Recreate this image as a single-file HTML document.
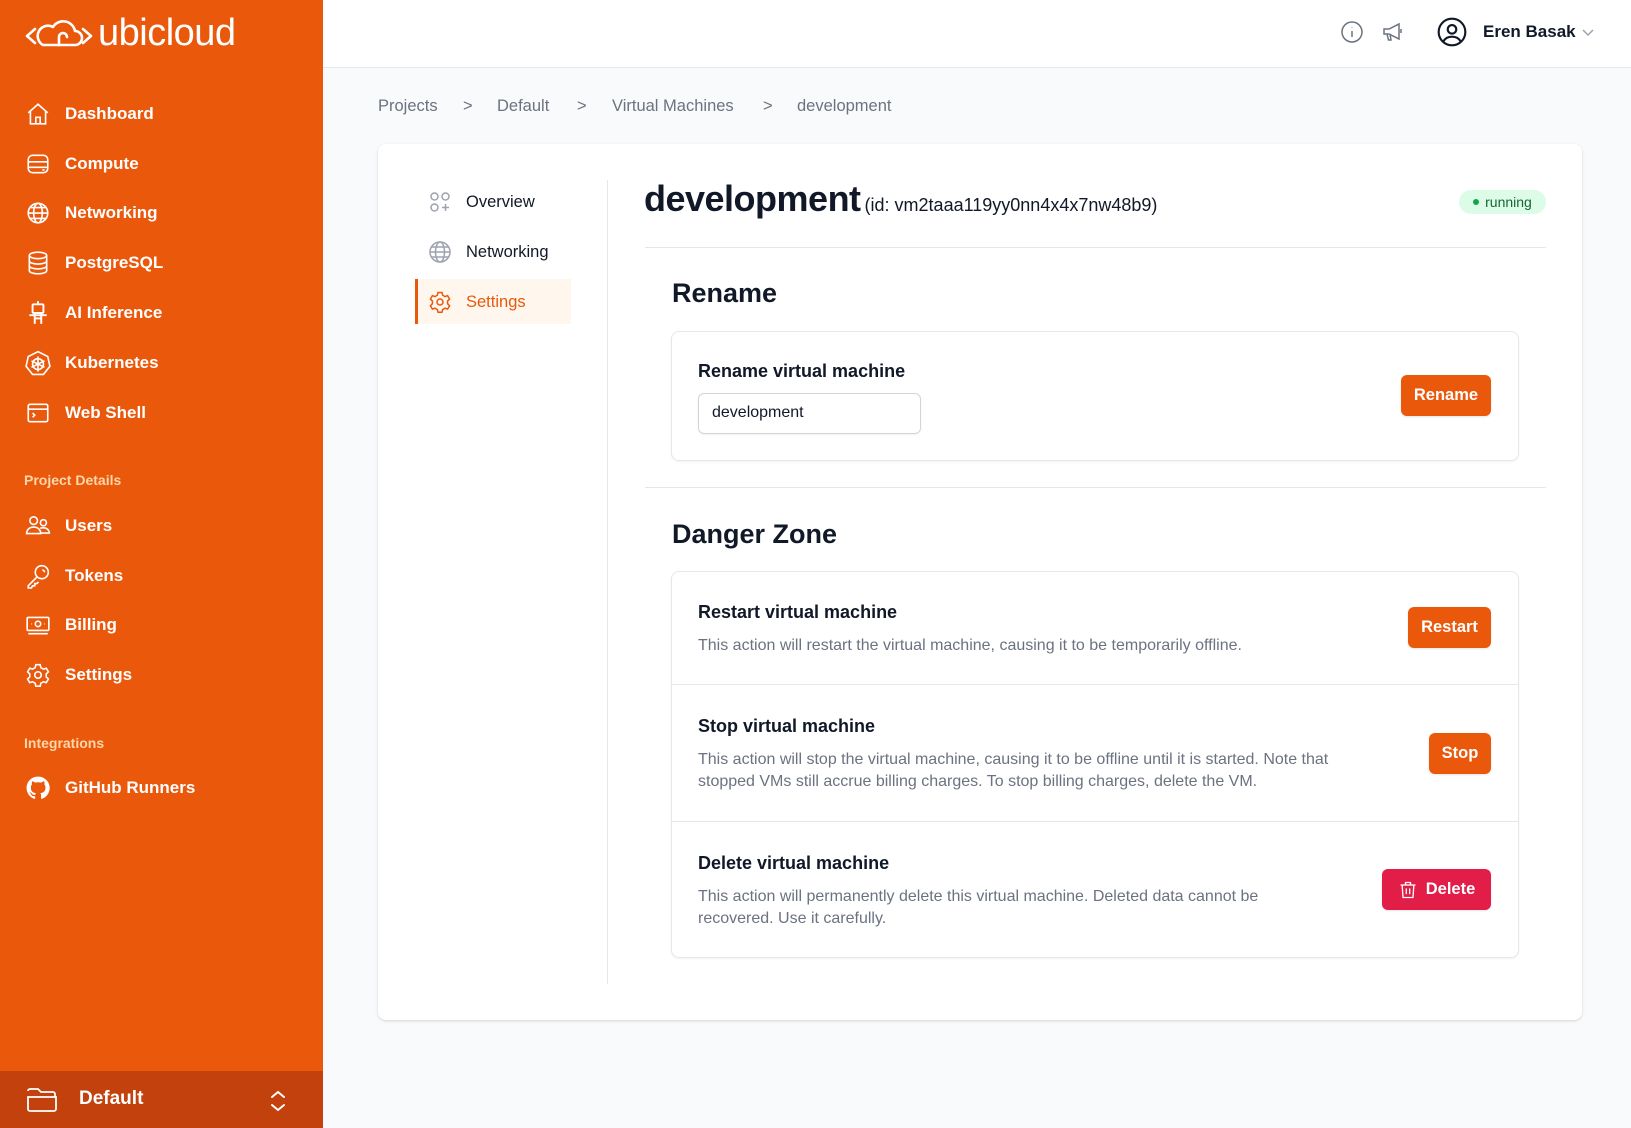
<!DOCTYPE html>
<html><head><meta charset="utf-8"><style>
*{box-sizing:border-box;margin:0;padding:0}
body{width:1631px;height:1128px;overflow:hidden;background:#f9fafb;font-family:"Liberation Sans",sans-serif;color:#111827;position:relative}
.abs{position:absolute}
#side{left:0;top:0;width:323px;height:1128px;background:#ea580c;color:#fff}
.nav{position:absolute;left:25px;height:26px;display:flex;align-items:center;font-size:17px;font-weight:bold;color:#fff}
.nav svg{width:26px;height:26px;margin-right:14px;flex:none}
.sec{position:absolute;left:24px;font-size:14px;color:#fed7aa;font-weight:bold}
#bottom{left:0;top:1071px;width:323px;height:57px;background:#c2410c}
#top{left:323px;top:0;width:1308px;height:68px;background:#fff;border-bottom:1px solid #e5e7eb}
.crumb{position:absolute;top:97px;font-size:16.5px;color:#6b7280}
#card{left:378px;top:144px;width:1204px;height:876px;background:#fff;border-radius:8px;box-shadow:0 1px 3px rgba(0,0,0,.1),0 1px 2px rgba(0,0,0,.06)}
.sub{position:absolute;left:428px;display:flex;align-items:center;font-size:16.5px;color:#111827;height:24px}
.sub svg{width:24px;height:24px;margin-right:14px}
.box{position:absolute;left:671px;width:848px;background:#fff;border:1px solid #e5e7eb;border-radius:8px;box-shadow:0 1px 2px rgba(0,0,0,.05)}
.t{position:absolute;left:698px;font-size:18px;font-weight:bold;color:#111827}
.d{position:absolute;left:698px;font-size:16px;color:#6b7280;line-height:22px}
.btn{position:absolute;height:41px;border-radius:6px;background:#ea580c;color:#fff;font-weight:bold;font-size:16.5px;display:flex;align-items:center;justify-content:center;box-shadow:0 1px 2px rgba(0,0,0,.1)}
.hr{position:absolute;left:645px;width:901px;height:1px;background:#e5e7eb}
</style></head><body>
<div id="side" class="abs">
 <div class="abs" style="left:24px;top:12px;display:flex;align-items:center">
  <svg width="70" height="34" viewBox="0 0 68 34" fill="none" stroke="#fff" stroke-width="2.6" stroke-linecap="round" stroke-linejoin="round"><path d="M10 12 L2 19 L10 26"/><path d="M58 12 L66 19 L58 26"/><path d="M18 28 H50 a7 7 0 0 0 0-14 a12 12 0 0 0-22-4 a8 8 0 0 0-10 18z"/><path d="M34 28 V20 a4 4 0 0 1 8 0"/></svg>
  <span style="font-size:38px;color:#fff;margin-left:4px;letter-spacing:-0.5px;font-weight:300">ubicloud</span>
 </div>
 <div class="nav" style="top:101px"><svg viewBox="0 0 24 24" fill="none" stroke="#fff" stroke-width="1.5"><path d="M3 11 L12 3 L21 11 M5 9 V21 H19 V9 M10 21 V15 H14 V21"/></svg>Dashboard</div>
 <div class="nav" style="top:151px"><svg viewBox="0 0 24 24" fill="none" stroke="#fff" stroke-width="1.5"><rect x="3" y="4" width="18" height="16" rx="4"/><path d="M3 10 H21 M3 15 H21 M16 17.5 h2"/></svg>Compute</div>
 <div class="nav" style="top:200px"><svg viewBox="0 0 24 24" fill="none" stroke="#fff" stroke-width="1.5"><circle cx="12" cy="12" r="9"/><ellipse cx="12" cy="12" rx="4" ry="9"/><path d="M3 12 H21 M5 7 H19 M5 17 H19"/></svg>Networking</div>
 <div class="nav" style="top:250px"><svg viewBox="0 0 24 24" fill="none" stroke="#fff" stroke-width="1.5"><ellipse cx="12" cy="5" rx="8" ry="3"/><path d="M4 5 V19 c0 1.7 3.6 3 8 3 s8-1.3 8-3 V5 M4 10 c0 1.7 3.6 3 8 3 s8-1.3 8-3 M4 14.5 c0 1.7 3.6 3 8 3 s8-1.3 8-3"/></svg>PostgreSQL</div>
 <div class="nav" style="top:300px"><svg viewBox="0 0 24 24" fill="none" stroke="#fff" stroke-width="1.8"><rect x="7" y="4" width="10" height="8" rx="1"/><path d="M12 1 V4 M4 14 H20 M9 12 V22 M15 12 V22 M9 17 H15"/></svg>AI Inference</div>
 <div class="nav" style="top:350px"><svg viewBox="0 0 24 24" fill="none" stroke="#fff" stroke-width="1.5"><path d="M12 1.5 L21 6 L23 15 L17 22.5 H7 L1 15 L3 6 Z"/><circle cx="12" cy="13" r="5"/><path d="M12 6 V20 M6 10 L18 16 M6 16 L18 10"/></svg>Kubernetes</div>
 <div class="nav" style="top:400px"><svg viewBox="0 0 24 24" fill="none" stroke="#fff" stroke-width="1.5"><rect x="3" y="4" width="18" height="16" rx="1.5"/><path d="M3 8.5 H21 M7 12 l2 2 l-2 2"/></svg>Web Shell</div>
 <div class="sec" style="top:472px">Project Details</div>
 <div class="nav" style="top:513px"><svg viewBox="0 0 24 24" fill="none" stroke="#fff" stroke-width="1.5"><circle cx="8" cy="7" r="3.5"/><circle cx="17" cy="9" r="2.8"/><path d="M1.5 19 c0-4 3-6 6.5-6 s6.5 2 6.5 6z M14 14 c4-1 8 0 8.5 4.5 H15"/></svg>Users</div>
 <div class="nav" style="top:563px"><svg viewBox="0 0 24 24" fill="none" stroke="#fff" stroke-width="1.5"><circle cx="15.5" cy="8.5" r="6"/><path d="M11 13 L3 21 V23 H6 L7 21 H9 V19 H11 L12.5 17.5 M16 6.5 a2 2 0 0 1 2 2"/></svg>Tokens</div>
 <div class="nav" style="top:612px"><svg viewBox="0 0 24 24" fill="none" stroke="#fff" stroke-width="1.5"><rect x="2" y="5" width="20" height="12" rx="1"/><circle cx="12" cy="11" r="2.5"/><path d="M3 20 H21 M6 11 h.5 M17.5 11 h.5"/></svg>Billing</div>
 <div class="nav" style="top:662px"><svg viewBox="0 0 24 24" fill="none" stroke="#fff" stroke-width="1.5"><circle cx="12" cy="12" r="3"/><path d="M10 2.5 h4 l.6 2.7 2.4 1.4 2.6-.9 2 3.4 -2 1.9 v2.8 l2 1.9 -2 3.4 -2.6-.9 -2.4 1.4 -.6 2.7 h-4 l-.6-2.7 -2.4-1.4 -2.6.9 -2-3.4 2-1.9 v-2.8 l-2-1.9 2-3.4 2.6.9 2.4-1.4z"/></svg>Settings</div>
 <div class="sec" style="top:735px">Integrations</div>
 <div class="nav" style="top:775px"><svg viewBox="0 0 24 24" fill="#fff"><path d="M12 1.5 a10.5 10.5 0 0 0-3.3 20.5 c.5.1.7-.2.7-.5 v-2 c-2.9.6-3.5-1.3-3.5-1.3 -.5-1.2-1.2-1.5-1.2-1.5 -1-.7.1-.6.1-.6 1 .1 1.6 1.1 1.6 1.1 .9 1.6 2.5 1.2 3.1.9 .1-.7.4-1.2.7-1.4 -2.3-.3-4.8-1.2-4.8-5.2 0-1.1.4-2.1 1.1-2.8 -.1-.3-.5-1.3.1-2.8 0 0 .9-.3 2.9 1.1 a10 10 0 0 1 5.3 0 c2-1.4 2.9-1.1 2.9-1.1 .6 1.5.2 2.5.1 2.8 .7.7 1.1 1.7 1.1 2.8 0 4-2.5 4.9-4.8 5.2 .4.3.7 1 .7 1.9 v2.9 c0 .3.2.6.7.5 A10.5 10.5 0 0 0 12 1.5z"/></svg>GitHub Runners</div>
 <div id="bottom" class="abs">
  <svg class="abs" style="left:26px;top:14px" width="32" height="28" viewBox="0 0 32 28" fill="none" stroke="#fff" stroke-width="1.8"><path d="M2 6 a2 2 0 0 1 2-2 h8 l3 3 h12 a2 2 0 0 1 2 2 v3 M2 12 h28 v12 a2 2 0 0 1-2 2 H4 a2 2 0 0 1-2-2z"/></svg>
  <div class="abs" style="left:79px;top:17px;font-size:19px;font-weight:bold;color:#fff">Default</div>
  <svg class="abs" style="left:268px;top:17px" width="20" height="26" viewBox="0 0 20 26" fill="none" stroke="#fff" stroke-width="2" stroke-linecap="round"><path d="M4 9 l6-5 l6 5 M4 17 l6 5 l6-5"/></svg>
 </div>
</div>
<div id="top" class="abs">
 <svg class="abs" style="left:1017px;top:20px" width="24" height="24" viewBox="0 0 24 24" fill="none" stroke="#6b7280" stroke-width="1.5"><circle cx="12" cy="12" r="10"/><path d="M12 11 v6 M12 7.5 v.5"/></svg>
 <svg class="abs" style="left:1058px;top:20px" width="24" height="24" viewBox="0 0 24 24" fill="none" stroke="#6b7280" stroke-width="1.5"><path d="M3 9 h5 l10-5 v15 l-10-5 H3z M6 14 l1.5 6 h2.5 l-1-6 M20 9 v4"/></svg>
 <svg class="abs" style="left:1113px;top:16px" width="32" height="32" viewBox="0 0 24 24" fill="none" stroke="#111827" stroke-width="1.6"><circle cx="12" cy="12" r="10"/><circle cx="12" cy="10" r="3.2"/><path d="M5.5 19 c1.5-2.5 3.8-3.5 6.5-3.5 s5 1 6.5 3.5"/></svg>
 <div class="abs" style="left:1160px;top:22px;font-size:17px;font-weight:bold">Eren Basak</div>
 <svg class="abs" style="left:1258px;top:25px" width="14" height="14" viewBox="0 0 14 14" fill="none" stroke="#9ca3af" stroke-width="1.5"><path d="M2 5 l5 5 l5-5"/></svg>
</div>
<div class="crumb" style="left:378px">Projects</div>
<div class="crumb" style="left:463px">&gt;</div>
<div class="crumb" style="left:497px">Default</div>
<div class="crumb" style="left:577px">&gt;</div>
<div class="crumb" style="left:612px">Virtual Machines</div>
<div class="crumb" style="left:763px">&gt;</div>
<div class="crumb" style="left:797px">development</div>
<div id="card" class="abs"></div>
<div class="sub" style="top:190px"><svg viewBox="0 0 24 24" fill="none" stroke="#9ca3af" stroke-width="1.5"><rect x="3" y="3" width="7" height="7" rx="3.5"/><rect x="14" y="3" width="7" height="7" rx="3.5"/><rect x="3" y="14" width="7" height="7" rx="3.5"/><path d="M17.5 14 v7 M14 17.5 h7"/></svg>Overview</div>
<div class="sub" style="top:240px"><svg viewBox="0 0 24 24" fill="none" stroke="#9ca3af" stroke-width="1.5"><circle cx="12" cy="12" r="10"/><ellipse cx="12" cy="12" rx="4.5" ry="10"/><path d="M2 12 H22 M4 7 H20 M4 17 H20"/></svg>Networking</div>
<div class="abs" style="left:415px;top:279px;width:156px;height:45px;background:#fff7ed;border-left:3px solid #ea580c"></div>
<div class="sub" style="top:290px;color:#ea580c"><svg viewBox="0 0 24 24" fill="none" stroke="#ea580c" stroke-width="1.5"><circle cx="12" cy="12" r="3"/><path d="M10 2.5 h4 l.6 2.7 2.4 1.4 2.6-.9 2 3.4 -2 1.9 v2.8 l2 1.9 -2 3.4 -2.6-.9 -2.4 1.4 -.6 2.7 h-4 l-.6-2.7 -2.4-1.4 -2.6.9 -2-3.4 2-1.9 v-2.8 l-2-1.9 2-3.4 2.6.9 2.4-1.4z"/></svg>Settings</div>
<div class="abs" style="left:607px;top:180px;width:1px;height:804px;background:#e5e7eb"></div>
<div class="abs" style="left:644px;top:178px;white-space:nowrap"><span style="font-size:36px;font-weight:bold;letter-spacing:-0.5px">development</span><span style="font-size:18px;margin-left:4px">(id: vm2taaa119yy0nn4x4x7nw48b9)</span></div>
<div class="abs" style="left:1459px;top:190px;width:87px;height:24px;border-radius:12px;background:#dcfce7;color:#166534;font-size:14px;display:flex;align-items:center;justify-content:center;gap:6px"><span style="width:6px;height:6px;border-radius:3px;background:#16a34a"></span>running</div>
<div class="hr" style="top:247px"></div>
<div class="abs" style="left:672px;top:278px;font-size:27px;font-weight:bold">Rename</div>
<div class="box" style="top:331px;height:130px"></div>
<div class="t" style="top:361px">Rename virtual machine</div>
<div class="abs" style="left:698px;top:393px;width:223px;height:41px;border:1px solid #d1d5db;border-radius:6px;padding:10px 13px;font-size:16px;box-shadow:0 1px 2px rgba(0,0,0,.05)">development</div>
<div class="btn" style="left:1401px;top:375px;width:90px">Rename</div>
<div class="hr" style="top:487px"></div>
<div class="abs" style="left:672px;top:519px;font-size:27px;font-weight:bold">Danger Zone</div>
<div class="box" style="top:571px;height:387px"></div>
<div class="abs" style="left:672px;top:684px;width:846px;height:1px;background:#e5e7eb"></div>
<div class="abs" style="left:672px;top:821px;width:846px;height:1px;background:#e5e7eb"></div>
<div class="t" style="top:602px">Restart virtual machine</div>
<div class="d" style="top:635px">This action will restart the virtual machine, causing it to be temporarily offline.</div>
<div class="btn" style="left:1408px;top:607px;width:83px">Restart</div>
<div class="t" style="top:716px">Stop virtual machine</div>
<div class="d" style="top:749px;width:680px">This action will stop the virtual machine, causing it to be offline until it is started. Note that stopped VMs still accrue billing charges. To stop billing charges, delete the VM.</div>
<div class="btn" style="left:1429px;top:733px;width:62px">Stop</div>
<div class="t" style="top:853px">Delete virtual machine</div>
<div class="d" style="top:886px;width:600px">This action will permanently delete this virtual machine. Deleted data cannot be recovered. Use it carefully.</div>
<div class="btn" style="left:1382px;top:869px;width:109px;background:#e11d48;gap:8px"><svg width="20" height="20" viewBox="0 0 24 24" fill="none" stroke="#fff" stroke-width="1.6"><path d="M3 6 H21 M9 6 V3 H15 V6 M5 6 L6 21 H18 L19 6 M10 10 V17 M14 10 V17"/></svg>Delete</div>
</body></html>
